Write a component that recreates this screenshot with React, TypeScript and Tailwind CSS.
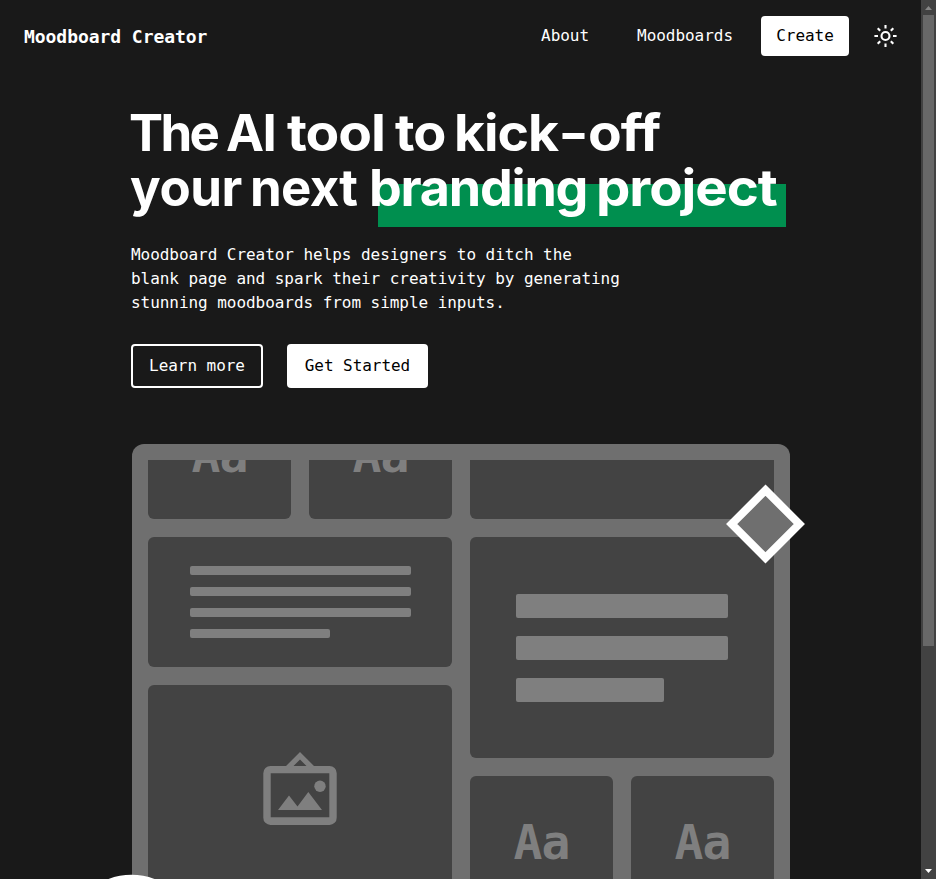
import type { ReactNode } from "react";

const MONO = "font-['DejaVu_Sans_Mono',monospace]";

function Tile({ className = "", children }: { className?: string; children?: ReactNode }) {
  return <div className={`rounded-[6px] bg-[#434343] ${className}`}>{children}</div>;
}

function FontTile() {
  return (
    <Tile className="flex h-[130px] w-[143px] shrink-0 justify-center">
      <span className="text-[48px] leading-[132px] font-bold tracking-[-1px] text-[#7f7f7f]">Aa</span>
    </Tile>
  );
}

function PictureIcon() {
  return (
    <svg className="h-[74px] w-[74px]" viewBox="0 0 74 74" fill="#7f7f7f">
      <path d="M37 0 L52 15 H22 Z M37 7.5 L29.5 15 H44.5 Z" fillRule="evenodd" />
      <path
        d="M7.5 14 H66.5 A7.2 7.2 0 0 1 73.7 21.2 V65.7 A7.2 7.2 0 0 1 66.5 73 H7.5 A7.2 7.2 0 0 1 0.3 65.7 V21.2 A7.2 7.2 0 0 1 7.5 14 Z M7.7 21.3 V65.3 H66.3 V21.3 Z"
        fillRule="evenodd"
      />
      <circle cx="57" cy="34.3" r="5.7" />
      <path d="M15 58 L26 43.5 L34.5 54.5 L45.3 40 L59 58 Z" />
    </svg>
  );
}

function SunIcon() {
  return (
    <svg className="h-6 w-6" viewBox="0 0 24 24" fill="none" stroke="#fff" strokeWidth="2.1">
      <circle cx="12.5" cy="12" r="4" />
      <path d="M12.5 .9v3.6M12.5 19.5v3.6M1.4 12h3.6M20 12h3.6M4.7 4.2l2.5 2.5M17.8 17.3l2.5 2.5M4.7 19.8l2.5-2.5M17.8 6.7l2.5-2.5" />
    </svg>
  );
}

function Header() {
  return (
    <header className="flex h-[72px] shrink-0 items-center justify-between pr-6 pl-6">
      <div className="text-[18px] font-bold tracking-[-0.05px]">Moodboard Creator</div>
      <nav className="flex items-center text-base tracking-[-0.04px]">
        <a className="mr-12">About</a>
        <a className="mr-7">Moodboards</a>
        <button className="mr-6 h-10 w-[88px] rounded-[4px] bg-white text-black">Create</button>
        <SunIcon />
      </nav>
    </header>
  );
}

function Hero() {
  return (
    <section className="ml-[131px] h-[372px] shrink-0">
      <h1 className="-ml-[2px] pt-[33px] font-['Inter',sans-serif] text-[51px] leading-[55px] font-bold whitespace-nowrap">
        <div className="flex">
          <span className="w-[97px] tracking-[-2.6px]">The </span>
          <span className="w-[61px] tracking-[-1.5px]">AI </span>
          <span className="w-[108px]">
            <span className="inline-block origin-left scale-x-108 tracking-[-1px]">tool </span>
          </span>
          <span className="w-[59px]">
            <span className="inline-block origin-left scale-x-106 tracking-[-1px]">to </span>
          </span>
          <span className="flex">
            <span className="w-[104px]">
              <span className="inline-block origin-left scale-x-105 tracking-[-1px]">kick</span>
            </span>
            <span className="w-[30px]">
              <span className="inline-block w-[22px] origin-left scale-x-130">-</span>
            </span>
            <span className="inline-block origin-left scale-x-108 tracking-[-1px]">off</span>
          </span>
        </div>
        <div className="flex">
          <span className="ml-px w-[120px] tracking-[-0.4px]">your </span>
          <span className="w-[119px] tracking-[-0.7px]">next </span>
          <span className="relative isolate flex">
            <span className="absolute top-[24px] left-[9px] -z-10 h-[43px] w-[408px] bg-[#008f4f]" />
            <span className="w-[227px]">
              <span className="inline-block origin-left scale-x-102 tracking-[-1.2px]">branding </span>
            </span>
            <span className="inline-block origin-left scale-x-107 tracking-[-1px]">project</span>
          </span>
        </div>
      </h1>
      <p className="mt-7 text-base leading-6 tracking-[-0.05px]">
        Moodboard Creator helps designers to ditch the
        <br />
        blank page and spark their creativity by generating
        <br />
        stunning moodboards from simple inputs.
      </p>
      <div className="mt-[29px] flex gap-6 tracking-[-0.05px]">
        <button className="h-11 w-[132px] rounded-[4px] border-2 border-white">Learn more</button>
        <button className="h-11 w-[141px] rounded-[4px] bg-white text-black">Get Started</button>
      </div>
    </section>
  );
}

function Board() {
  return (
    <section className="relative ml-[132px] h-[435px] w-[658px] shrink-0 rounded-t-[12px] bg-[#6f6f6f] px-4 pt-4">
      <div className="flex h-[419px] gap-[18px] overflow-hidden">
        <div className="flex w-[304px] shrink-0 flex-col gap-[18px]">
          <div className="-mt-[71px] flex gap-[18px]">
            <FontTile />
            <FontTile />
          </div>
          <Tile className="flex h-[130px] shrink-0 flex-col gap-3 pt-[29px] pl-[42px]">
            <div className="h-[9px] w-[221px] rounded-[2px] bg-[#7f7f7f]" />
            <div className="h-[9px] w-[221px] rounded-[2px] bg-[#7f7f7f]" />
            <div className="h-[9px] w-[221px] rounded-[2px] bg-[#7f7f7f]" />
            <div className="h-[9px] w-[140px] rounded-[2px] bg-[#7f7f7f]" />
          </Tile>
          <Tile className="flex h-[221px] shrink-0 justify-center pt-[67px]">
            <PictureIcon />
          </Tile>
        </div>
        <div className="flex w-[304px] shrink-0 flex-col gap-[18px]">
          <Tile className="-mt-[20px] h-[79px] shrink-0" />
          <Tile className="flex h-[221px] shrink-0 flex-col gap-[18px] pt-[57px] pl-[46px]">
            <div className="h-6 w-[212px] rounded-[2px] bg-[#7f7f7f]" />
            <div className="h-6 w-[212px] rounded-[2px] bg-[#7f7f7f]" />
            <div className="h-6 w-[148px] rounded-[2px] bg-[#7f7f7f]" />
          </Tile>
          <div className="flex gap-[18px]">
            <FontTile />
            <FontTile />
          </div>
        </div>
      </div>
      <svg className="absolute top-[40px] left-[593px] h-[80px] w-[80px]" viewBox="0 0 80 80">
        <path d="M40.5 6.2 L74.3 40 L40.5 73.8 L6.7 40 Z" fill="#6f6f6f" stroke="#fff" strokeWidth="8" />
      </svg>
      <svg className="absolute top-[430px] left-[-34px] h-[5px] w-[68px]" viewBox="0 0 68 5">
        <circle cx="33.5" cy="65.8" r="65" fill="#fff" />
      </svg>
    </section>
  );
}

function ScrollBar() {
  return (
    <div className="flex w-[15px] shrink-0 flex-col items-center justify-between bg-[#424242]">
      <svg className="h-[15px] w-[15px] shrink-0" viewBox="0 0 15 15">
        <path d="M4 10 L7.5 6 L11 10 Z" fill="#868686" />
      </svg>
      <div className="h-[631px] w-[11px] bg-[#686868]" />
      <div className="grow" />
      <svg className="h-[15px] w-[15px] shrink-0" viewBox="0 0 15 15">
        <path d="M4 5 L11 5 L7.5 9 Z" fill="#fff" />
      </svg>
    </div>
  );
}

export default function App() {
  return (
    <div className={`flex h-[879px] w-[936px] overflow-hidden bg-[#191919] text-white ${MONO}`}>
      <main className="flex w-[921px] shrink-0 flex-col">
        <Header />
        <Hero />
        <Board />
      </main>
      <ScrollBar />
    </div>
  );
}
